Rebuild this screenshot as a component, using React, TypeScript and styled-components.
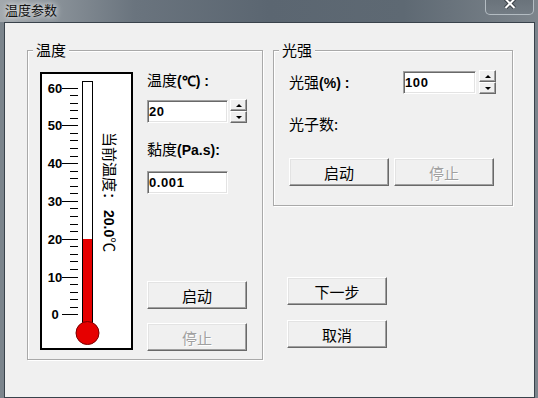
import React from "react";
import styled, { createGlobalStyle } from "styled-components";

const GlobalStyle = createGlobalStyle`
    html, body {
        margin: 0;
        padding: 0;
    }
    body {
        font-family: "Noto Sans CJK SC", "Liberation Sans", sans-serif;
        color: #000;
    }
`;

const Window = styled.div`
    width: 538px;
    height: 398px;
    display: flex;
    flex-direction: column;
    background: #7b848c;
    overflow: hidden;
`;

const TitleBar = styled.div`
    height: 22px;
    flex: none;
    display: flex;
    align-items: flex-start;
    justify-content: space-between;
    padding: 0 4px 0 5px;
    background: linear-gradient(90deg, #a3a9ae 0%, #8a9299 10%, #6a747e 25%, #5b6671 50%, #5e6973 75%, #7d858c 100%);
`;

const Title = styled.span`
    margin-top: 1px;
    font-size: 13px;
    line-height: 18px;
    color: #111;
    text-shadow: 0 0 5px rgba(255, 255, 255, 0.9), 0 0 9px rgba(255, 255, 255, 0.6);
`;

const CloseButton = styled.div`
    width: 47px;
    height: 14px;
    display: flex;
    justify-content: center;
    align-items: flex-start;
    border: 1px solid rgba(205, 212, 218, 0.75);
    border-top: none;
    border-radius: 0 0 5px 5px;
    background: linear-gradient(#6a737b, #737c84);
`;

const Client = styled.div`
    flex: 1;
    margin: 0 3px 0 4px;
    border: 1px solid #39424b;
    background: #f0f0f0;
    display: flex;
    align-items: flex-start;
    gap: 10px;
    padding: 27px 0 0 22px;
`;

const Group = styled.div<{ $w: number; $h: number }>`
    position: relative;
    width: ${(p) => p.$w}px;
    height: ${(p) => p.$h}px;
    box-sizing: border-box;
    border: 1px solid #a9a9a9;
    box-shadow: inset 1px 1px 0 #fff, 1px 1px 0 #fff;
`;

const Legend = styled.span`
    position: absolute;
    top: -11px;
    left: 5px;
    padding: 0 3px;
    background: #f0f0f0;
    font-size: 15px;
    line-height: 20px;
`;

const TempBody = styled.div`
    display: flex;
    gap: 14px;
    padding: 19px 0 0 12px;
`;

const ThermoBox = styled.div`
    margin-top: 2px;
    width: 93px;
    height: 278px;
    box-sizing: border-box;
    border: 2px solid #000;
    background: #fff;
`;

const Column = styled.div`
    display: flex;
    flex-direction: column;
    align-items: flex-start;
`;

const Label = styled.div<{ $mt?: number }>`
    margin-top: ${(p) => p.$mt ?? 0}px;
    font-size: 15px;
    line-height: 20px;
    white-space: nowrap;
`;

const Latin = styled.span`
    font-family: "Liberation Sans", sans-serif;
    font-weight: bold;
    font-size: 14px;
`;

const FieldRow = styled.div<{ $mt?: number }>`
    margin-top: ${(p) => p.$mt ?? 0}px;
    display: flex;
    align-items: center;
`;

const Field = styled.input<{ $w: number }>`
    width: ${(p) => p.$w}px;
    height: 23px;
    box-sizing: border-box;
    margin: 0;
    padding: 0 0 0 1px;
    border: 1px solid;
    border-color: #a0a0a0 #fff #fff #a0a0a0;
    box-shadow: inset 1px 1px 0 #696969, inset -1px -1px 0 #e3e3e3;
    background: #fff;
    font-family: "Liberation Sans", sans-serif;
    font-weight: bold;
    font-size: 13px;
    letter-spacing: 0.6px;
    color: #000;
    outline: none;
`;

const Spin = styled.div<{ $ml: number }>`
    margin-left: ${(p) => p.$ml}px;
    width: 17px;
    display: flex;
    flex-direction: column;
`;

const SpinHalf = styled.div`
    height: 12px;
    box-sizing: border-box;
    border: 1px solid;
    border-color: #fff #696969 #696969 #fff;
    box-shadow: inset -1px -1px 0 #a0a0a0;
    background: #f0f0f0;
    display: flex;
    align-items: center;
    justify-content: center;
`;

const Arrow = styled.div<{ $up?: boolean }>`
    width: 0;
    height: 0;
    border-left: 3px solid transparent;
    border-right: 3px solid transparent;
    ${(p) => (p.$up ? "border-bottom: 3px solid #000;" : "border-top: 3px solid #000;")}
`;

const Button = styled.button<{ $mt?: number }>`
    margin: ${(p) => p.$mt ?? 0}px 0 0 0;
    width: 100px;
    height: 28px;
    box-sizing: border-box;
    padding: 0;
    border: 1px solid;
    border-color: #fff #696969 #696969 #fff;
    box-shadow: inset -1px -1px 0 #a0a0a0, inset 1px 1px 0 #e3e3e3;
    background: #f0f0f0;
    font-family: "Noto Sans CJK SC", sans-serif;
    font-size: 15px;
    color: #000;

    &:disabled {
        color: #a0a0a0;
        text-shadow: 1px 1px 0 #fff;
    }
`;

const LightBody = styled.div`
    padding: 19px 0 0 15px;
    display: flex;
    flex-direction: column;
    align-items: flex-start;
`;

const RowLabel = styled.div`
    width: 114px;
    font-size: 15px;
    line-height: 20px;
`;

const ButtonRow = styled.div<{ $mt: number }>`
    margin-top: ${(p) => p.$mt}px;
    display: flex;
    gap: 5px;
`;

const RightColumn = styled.div`
    display: flex;
    flex-direction: column;
`;

const NavButtons = styled.div`
    margin: 71px 0 0 14px;
    display: flex;
    flex-direction: column;
`;

const SpinBox = ({ ml }: { ml: number }) => (
    <Spin $ml={ml}>
        <SpinHalf>
            <Arrow $up />
        </SpinHalf>
        <SpinHalf>
            <Arrow />
        </SpinHalf>
    </Spin>
);

const Thermometer = ({ value }: { value: number }) => {
    const yOf = (v: number) => 240.3 - v * 3.78;
    const marks = [];
    for (let v = 0; v <= 60; v += 2) {
        const y = Math.round(yOf(v)) + 0.5;
        const major = v % 10 === 0;
        marks.push(
            <line key={"t" + v} x1={major ? 20 : 28} x2={36} y1={y} y2={y} stroke="#000" strokeWidth={1} />
        );
        if (major) {
            marks.push(
                <text
                    key={"n" + v}
                    x={13}
                    y={y + 4.5}
                    textAnchor="middle"
                    fontFamily="Liberation Sans, sans-serif"
                    fontWeight="bold"
                    fontSize={13}
                >
                    {v}
                </text>
            );
        }
    }
    const top = Math.round(yOf(value));
    return (
        <svg width="89" height="274" viewBox="0 0 89 274">
            {marks}
            <rect x={40.5} y={7.5} width={10} height={252} fill="#fff" stroke="#000" />
            <rect x={41} y={top} width={9} height={259 - top} fill="#e60000" />
            <line x1={40.5} x2={40.5} y1={top} y2={250} stroke="#000" />
            <line x1={50.5} x2={50.5} y1={top} y2={250} stroke="#000" />
            <circle cx={45.5} cy={259} r={11.5} fill="#e60000" stroke="#7a0000" strokeWidth={1} />
            <text
                transform="translate(67 58) rotate(90)"
                x={0}
                y={5.5}
                fontFamily="Noto Sans CJK SC, sans-serif"
                fontSize={15}
            >
                当前温度：
                <tspan fontFamily="Liberation Sans, sans-serif" fontWeight="bold" fontSize={14} dx={3}>
                    {value.toFixed(1)}
                </tspan>
                ℃
            </text>
        </svg>
    );
};

export default function App() {
    return (
        <>
            <GlobalStyle />
            <Window>
                <TitleBar>
                    <Title>温度参数</Title>
                    <CloseButton>
                        <svg width="12" height="9" viewBox="0 0 12 9">
                            <path d="M1.5 -1 L10.5 8 M10.5 -1 L1.5 8" stroke="#3a4047" strokeWidth="4" />
                            <path d="M1.5 -1 L10.5 8 M10.5 -1 L1.5 8" stroke="#fff" strokeWidth="2" />
                        </svg>
                    </CloseButton>
                </TitleBar>
                <Client>
                    <Group $w={236} $h={310}>
                        <Legend>温度</Legend>
                        <TempBody>
                            <ThermoBox>
                                <Thermometer value={20} />
                            </ThermoBox>
                            <Column>
                                <Label>
                                    温度<Latin>(℃) :</Latin>
                                </Label>
                                <FieldRow $mt={8}>
                                    <Field $w={81} defaultValue="20" />
                                    <SpinBox ml={2} />
                                </FieldRow>
                                <Label $mt={16}>
                                    黏度<Latin>(Pa.s):</Latin>
                                </Label>
                                <FieldRow $mt={11}>
                                    <Field $w={81} defaultValue="0.001" />
                                </FieldRow>
                                <Button $mt={87}>启动</Button>
                                <Button $mt={14} disabled>
                                    停止
                                </Button>
                            </Column>
                        </TempBody>
                    </Group>
                    <RightColumn>
                        <Group $w={240} $h={156}>
                            <Legend>光强</Legend>
                            <LightBody>
                                <FieldRow>
                                    <RowLabel>
                                        光强<Latin>(%) :</Latin>
                                    </RowLabel>
                                    <Field $w={73} defaultValue="100" />
                                    <SpinBox ml={3} />
                                </FieldRow>
                                <Label $mt={20}>光子数:</Label>
                                <ButtonRow $mt={24}>
                                    <Button>启动</Button>
                                    <Button disabled>停止</Button>
                                </ButtonRow>
                            </LightBody>
                        </Group>
                        <NavButtons>
                            <Button>下一步</Button>
                            <Button $mt={15}>取消</Button>
                        </NavButtons>
                    </RightColumn>
                </Client>
            </Window>
        </>
    );
}
